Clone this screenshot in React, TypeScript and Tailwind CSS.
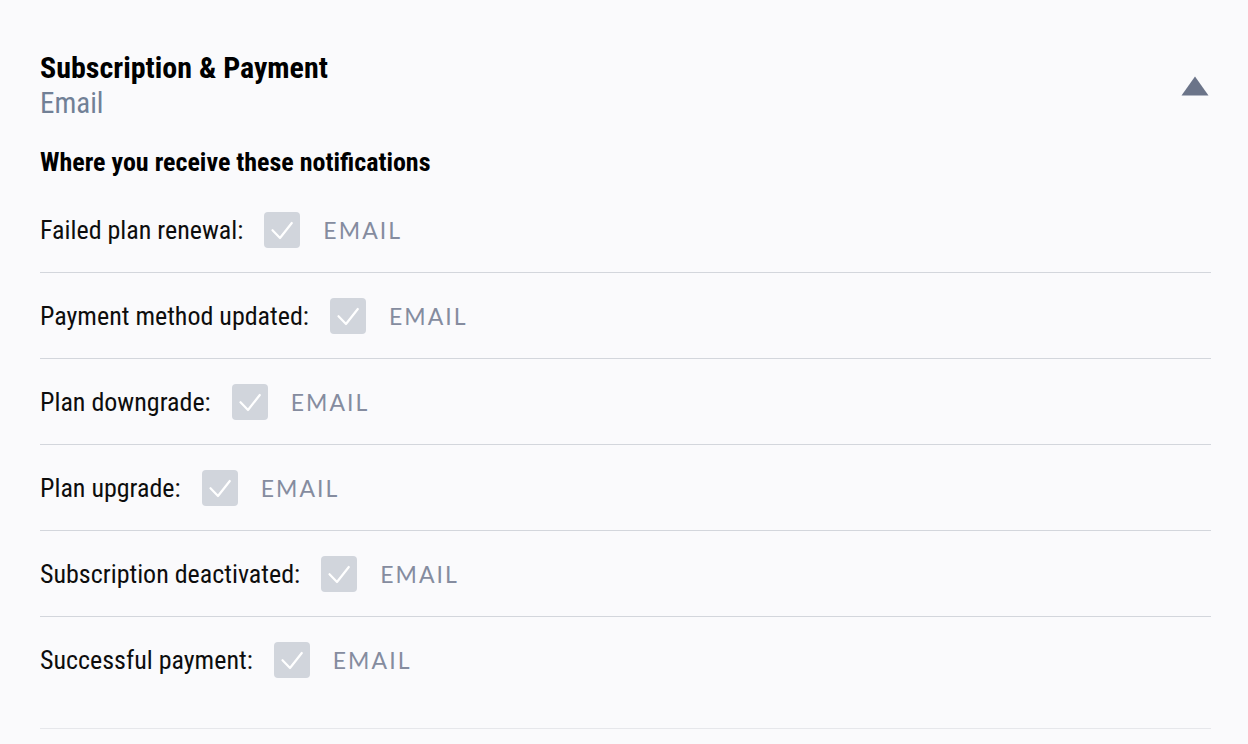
import React from "react";

const rows = [
  "Failed plan renewal:",
  "Payment method updated:",
  "Plan downgrade:",
  "Plan upgrade:",
  "Subscription deactivated:",
  "Successful payment:",
];

const cond = { fontFamily: '"Roboto Condensed", "Liberation Sans Narrow", Roboto, sans-serif' };

function Check() {
  return (
    <span className="flex h-9 w-9 shrink-0 items-center justify-center rounded-[4px] bg-[#d1d5dc]">
      <svg width="36" height="36" viewBox="0 0 36 36" fill="none">
        <path d="M8.5 18.2 L16 26 L27.8 11" stroke="#ffffff" strokeWidth="2.2" strokeLinecap="round" strokeLinejoin="round" />
      </svg>
    </span>
  );
}

export default function App() {
  return (
    <div className="min-h-[744px] w-full bg-[#fafafc]" style={cond}>
      <div className="pl-10 pr-[37px] pt-[51px]">
        <div className="flex items-center justify-between">
          <div>
            <div className="text-[30px] font-bold leading-[34px] text-black">Subscription &amp; Payment</div>
            <div className="mt-px text-[29px] leading-[34px] text-[#718096]">Email</div>
          </div>
          <svg width="28" height="20" viewBox="0 0 28 20" className="mr-[2px] mt-[1px]">
            <path d="M14 0.5 L27.5 19.5 L0.5 19.5 Z" fill="#6b7489" />
          </svg>
        </div>
        <div className="mt-[27px] text-[26px] font-bold leading-[30px] text-black">Where you receive these notifications</div>
        <div className="mt-[10px]">
          {rows.map((r, i) => (
            <div
              key={r}
              className={
                "flex items-center border-b pt-[25px] " +
                (i === rows.length - 1 ? "border-[#e6e7eb] pb-[50px]" : "border-[#d3d6dc] pb-[24px]")
              }
            >
              <span className="text-[26px] leading-9 text-[#0d0d0d]">{r}</span>
              <span className="ml-[21px]"><Check /></span>
              <span
                className="ml-[23px] text-[23px] leading-9 tracking-[0.09em] text-[#858c9f]"
                style={{ fontFamily: 'Lato, "Open Sans", sans-serif' }}
              >
                EMAIL
              </span>
            </div>
          ))}
        </div>
      </div>
    </div>
  );
}
